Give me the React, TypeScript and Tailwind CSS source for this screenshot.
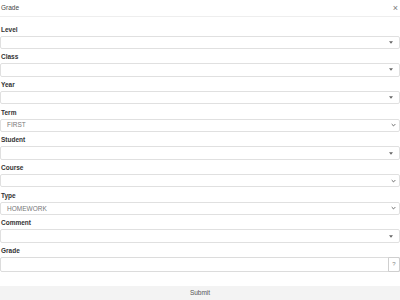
import { useState } from "react";

type Field = {
  label: string;
  kind: "combo" | "select" | "grade";
  value?: string;
};

const fields: Field[] = [
  { label: "Level", kind: "combo" },
  { label: "Class", kind: "combo" },
  { label: "Year", kind: "combo" },
  { label: "Term", kind: "select", value: "FIRST" },
  { label: "Student", kind: "combo" },
  { label: "Course", kind: "select" },
  { label: "Type", kind: "select", value: "HOMEWORK" },
  { label: "Comment", kind: "combo" },
  { label: "Grade", kind: "grade" },
];

function Caret() {
  return (
    <svg width="4" height="3" viewBox="0 0 4 3" className="shrink-0 mr-[3px]">
      <path d="M0 0.3h4L2 2.7z" fill="#666" />
    </svg>
  );
}

function Chevron() {
  return (
    <svg width="5" height="4" viewBox="0 0 5 4" className="shrink-0">
      <path d="M0.7 1.1L2.5 2.9L4.3 1.1" fill="none" stroke="#666" strokeWidth="1" />
    </svg>
  );
}

export default function App() {
  const [grade, setGrade] = useState("");

  return (
    <div className="w-[400px] h-[300px] bg-white flex flex-col font-['Liberation_Sans',Arial,sans-serif] text-[#333] overflow-hidden">
      {/* header */}
      <div className="h-[17px] shrink-0 flex items-center justify-between pl-[1px] pr-[2px] border-b border-[#eeeeee]">
        <span className="text-[6.5px] text-[#444]">Grade</span>
        <span className="text-[9px] leading-none text-[#777]">×</span>
      </div>

      {/* form */}
      <div className="flex-1 flex flex-col pt-[7.5px]">
        {fields.map((f) => (
          <div key={f.label} className="flex flex-col mb-[3.2px]">
            <label className="h-[9px] leading-[9px] text-[6.5px] font-bold text-[#333] pl-[1px] mb-[2px]">
              {f.label}
            </label>
            {f.kind === "grade" ? (
              <div className="flex h-[15px] border border-[#dcdcdc] rounded-[2px]">
                <input
                  value={grade}
                  onChange={(e) => setGrade(e.target.value)}
                  className="flex-1 min-w-0 outline-none text-[6.5px] px-[4px]"
                />
                <div className="w-[12px] flex items-center justify-center border border-[#cfcfcf] rounded-[1px] -my-[1px] -mr-[1px] text-[6px] text-[#888]">
                  ?
                </div>
              </div>
            ) : (
              <div className="flex items-center justify-between h-[13.5px] border border-[#e0e0e0] rounded-[2px] pl-[6px] pr-[3px]">
                <span className="text-[6.5px] text-[#777]">{f.value ?? ""}</span>
                {f.kind === "combo" ? <Caret /> : <Chevron />}
              </div>
            )}
          </div>
        ))}
      </div>

      {/* footer */}
      <div className="h-[14px] shrink-0 bg-[#f3f3f3] flex items-center justify-center">
        <span className="text-[6.5px] text-[#555]">Submit</span>
      </div>
    </div>
  );
}
